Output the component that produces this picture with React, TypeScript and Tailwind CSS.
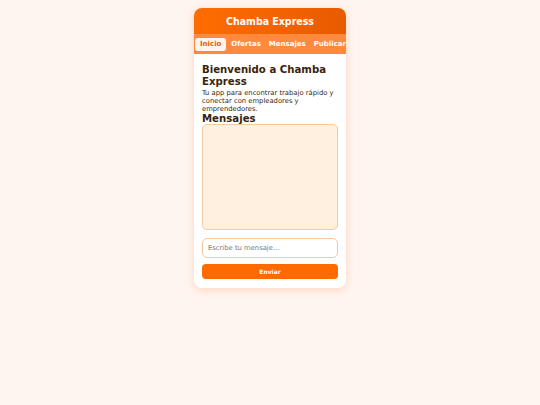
export default function App() {
  return (
    <div
      className="min-h-screen w-full bg-[#fff5f0] flex justify-center pt-2"
      style={{ fontFamily: '"DejaVu Sans", sans-serif' }}
    >
      <div className="w-[152px] h-[280px] bg-white rounded-[8px] overflow-hidden shadow-[0_2px_8px_rgba(255,120,50,0.25)] flex flex-col">
        {/* Header */}
        <div className="h-[26px] bg-gradient-to-r from-[#ff6d00] to-[#e85a00] flex items-center justify-center">
          <h1 className="text-white font-bold text-[10.5px] leading-none [font-family:'DejaVu_Sans_Condensed',sans-serif]">
            Chamba Express
          </h1>
        </div>

        {/* Nav */}
        <nav className="h-[20px] bg-[#ff8a3d] flex items-center gap-[5px] px-[1px] whitespace-nowrap overflow-hidden">
          <span className="bg-[#fff5ee] text-[#e65c00] font-bold text-[7px] px-[5px] py-[3px] rounded-[3px] leading-none">
            Inicio
          </span>
          <span className="text-white font-bold text-[7px] leading-none">Ofertas</span>
          <span className="text-white font-bold text-[7px] leading-none ml-[3px]">Mensajes</span>
          <span className="text-white font-bold text-[7px] leading-none ml-[3px]">Publicar</span>
        </nav>

        {/* Content */}
        <main className="flex flex-col px-[8px] pt-[10px]">
          <h2 className="text-[#3a1f0a] font-bold text-[11.3px] leading-[12px] [font-family:'DejaVu_Sans_Condensed',sans-serif]">
            Bienvenido a Chamba Express
          </h2>
          <p className="text-[#3a1f0a] text-[6.8px] leading-[8px] mt-[1px]">
            Tu app para encontrar trabajo rápido y conectar con empleadores y emprendedores.
          </p>
          <h3 className="text-[#3a1f0a] font-bold text-[11.3px] leading-[10px] mt-[1px] [font-family:'DejaVu_Sans_Condensed',sans-serif]">
            Mensajes
          </h3>
          <div className="mt-[0px] h-[106px] bg-[#fff0e0] border border-[#f5c9a2] rounded-[5px]"></div>
          <input
            className="mt-[8px] h-[20px] border border-[#f5c9a2] rounded-[5px] px-[5px] text-[6.8px] text-[#555] placeholder:text-[#777] outline-none"
            placeholder="Escribe tu mensaje..."
          />
          <button className="mt-[6px] h-[15px] bg-[#ff6a00] rounded-[4px] text-white font-bold text-[6px] leading-none">
            Enviar
          </button>
        </main>
      </div>
    </div>
  );
}
